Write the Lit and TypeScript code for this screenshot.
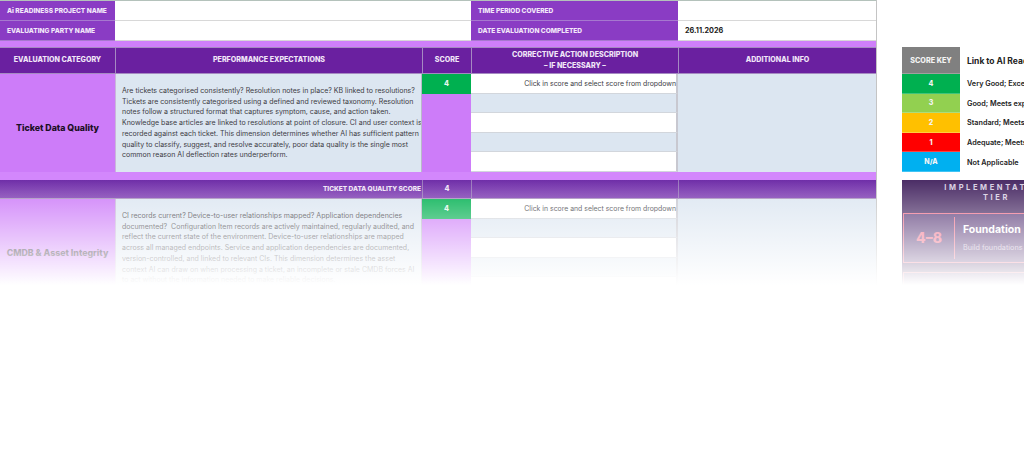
import { LitElement, html, css } from 'lit';
import { customElement } from 'lit/decorators.js';

const FIRST_TEXT = `Are tickets categorised consistently? Resolution notes in place? KB linked to resolutions?
Tickets are consistently categorised using a defined and reviewed taxonomy. Resolution
notes follow a structured format that captures symptom, cause, and action taken.
Knowledge base articles are linked to resolutions at point of closure. CI and user context is
recorded against each ticket. This dimension determines whether AI has sufficient pattern
quality to classify, suggest, and resolve accurately, poor data quality is the single most
common reason AI deflection rates underperform.`;

const SECOND_TEXT = `CI records current? Device-to-user relationships mapped? Application dependencies
documented?  Configuration Item records are actively maintained, regularly audited, and
reflect the current state of the environment. Device-to-user relationships are mapped
across all managed endpoints. Service and application dependencies are documented,
version-controlled, and linked to relevant CIs. This dimension determines the asset
context AI can draw on when processing a ticket, an incomplete or stale CMDB forces AI
to act without the information needed to make reliable decisions.`;

const KEY = [
  { score: '4', label: 'Very Good; Exceeds expectations', color: 'k4' },
  { score: '3', label: 'Good; Meets expectations', color: 'k3' },
  { score: '2', label: 'Standard; Meets requirements', color: 'k2' },
  { score: '1', label: 'Adequate; Meets minimum', color: 'k1' },
  { score: 'N/A', label: 'Not Applicable', color: 'kna' },
];

@customElement('app-root')
export class AppRoot extends LitElement {
  static styles = css`
    :host {
      display: block;
      position: relative;
      width: 1024px;
      height: 457px;
      overflow: hidden;
      background: #fff;
      font-family: 'Inter', 'Liberation Sans', sans-serif;
      color: #222;
    }
    .page {
      display: flex;
      align-items: flex-start;
      width: 1300px;
    }

    /* sheet */
    .sheet {
      width: 877px;
      flex: none;
      border-right: 1px solid #c4c4c4;
      box-sizing: border-box;
      height: 300px;
      overflow: hidden;
    }
    .grid {
      display: grid;
      grid-template-columns: 115px 307px 49px 207px 198px;
    }
    .meta {
      grid-template-rows: 20px 20px;
      border-top: 1px solid #b4c2bb;
      height: 40px;
      box-sizing: border-box;
    }
    .meta-label {
      background: #8a3cc4;
      color: #f3e8fa;
      font-size: 6.55px;
      font-weight: 800;
      display: flex;
      align-items: center;
      padding-left: 7px;
      border-bottom: 1px solid #a678cf;
      white-space: nowrap;
    }
    .meta-value {
      background: #fff;
      font-size: 7.25px;
      font-weight: 700;
      display: flex;
      align-items: center;
      padding-left: 7px;
      border-bottom: 1px solid #d8d8d8;
    }
    .wide {
      grid-column: span 2;
    }
    .strip {
      height: 7px;
      background: #cf7ffa;
    }
    .strip.low {
      height: 8px;
      background: #d387fc;
    }
    .head {
      grid-template-rows: 27px;
    }
    .head div {
      background: #6a20a0;
      color: #f1e6f8;
      font-size: 7.1px;
      font-weight: 800;
      line-height: 10.7px;
      text-align: center;
      display: flex;
      align-items: center;
      justify-content: center;
      border-left: 1px solid #a58ac2;
      border-top: 1px solid #a58ac2;
      border-bottom: 1px solid #a58ac2;
      box-sizing: border-box;
    }
    .head div:first-child {
      border-left: none;
    }

    /* category block */
    .block {
      grid-template-rows: repeat(5, 19.6px);
    }
    .category {
      grid-row: span 5;
      background: #cd7cf9;
      display: flex;
      align-items: center;
      justify-content: center;
      padding-top: 9px;
      font-size: 8.8px;
      font-weight: 800;
      color: #1c0f26;
    }
    .expect {
      grid-row: span 5;
      background: #dce6f1;
      border-left: 1px solid #c9b6da;
      border-right: 1px solid #b9b9c9;
      font-size: 7px;
      line-height: 10.7px;
      color: #3c3c44;
      white-space: pre;
      display: flex;
      align-items: center;
      padding: 1px 0 0 6px;
      overflow: hidden;
    }
    .score {
      background: #00b050;
      color: #e8f8ee;
      font-size: 7.25px;
      font-weight: 800;
      display: flex;
      align-items: center;
      justify-content: center;
    }
    .score-rest {
      grid-row: span 4;
      grid-column: 3;
      background: #cd7cf9;
    }
    .action {
      grid-column: 4;
      border-right: 2px solid #c8c8d0;
      border-bottom: 1px solid #d2d6dc;
      font-size: 6.9px;
      color: #3c3c44;
      display: flex;
      align-items: center;
      justify-content: flex-end;
      background: #fff;
      white-space: nowrap;
    }
    .action.alt {
      background: #dce6f1;
    }
    .info {
      grid-column: 5;
      grid-row: 1 / span 5;
      background: #dce6f1;
    }
    .total {
      grid-template-rows: 19px;
    }
    .total div {
      background: linear-gradient(#6f2ea8, #8040b4);
      color: #f1e6f8;
      font-size: 6.5px;
      font-weight: 800;
      display: flex;
      align-items: center;
      border-bottom: 1px solid #a890bd;
      border-left: 1px solid #9a78bc;
    }
    .total .name {
      grid-column: span 2;
      justify-content: flex-end;
      padding-right: 1px;
      border-left: none;
    }
    .total .num {
      justify-content: center;
      font-size: 7.25px;
    }

    /* score key */
    .side {
      flex: none;
      margin: 47px 0 0 25px;
      width: 400px;
    }
    .key {
      display: grid;
      grid-template-columns: 58px 1fr;
      grid-template-rows: 27px repeat(5, 19.6px);
      align-items: center;
    }
    .swatch {
      align-self: stretch;
      display: flex;
      align-items: center;
      justify-content: center;
      color: #f4f4f4;
      font-size: 7px;
      font-weight: 800;
      border-bottom: 1px solid rgba(255, 255, 255, 0.25);
    }
    .swatch.title {
      background: #808080;
      font-size: 7.2px;
    }
    .k4 { background: #00b050; }
    .k3 { background: #92d050; }
    .k2 { background: #ffc000; }
    .k1 { background: #ff0000; }
    .kna { background: #00b0f0; }
    .key-text {
      padding-left: 7px;
      font-size: 7.25px;
      font-weight: 600;
      color: #222;
      white-space: nowrap;
    }
    .key-text.title {
      font-size: 8.5px;
      font-weight: 700;
    }

    /* tier panel */
    .tier {
      margin-top: 8px;
      width: 188px;
      height: 112px;
      background: #4b2d66;
      box-sizing: border-box;
      padding: 3px 0 0 1px;
    }
    .tier-title {
      text-align: center;
      color: #d8cfe2;
      font-size: 7.5px;
      font-weight: 700;
      letter-spacing: 2.6px;
      line-height: 10px;
    }
    .tier-card {
      display: flex;
      align-items: center;
      margin-top: 10px;
      height: 50px;
      border: 1px solid #f0708c;
      box-sizing: border-box;
      background: #5e3f7c;
    }
    .tier-card + .tier-card {
      margin-top: 9px;
    }
    .range {
      width: 50px;
      flex: none;
      text-align: center;
      font-size: 14px;
      font-weight: 800;
      color: #f0708c;
    }
    .tier-body {
      border-left: 1px solid #f0708c;
      padding-left: 8px;
      height: 42px;
      display: flex;
      flex-direction: column;
      justify-content: center;
      gap: 7px;
    }
    .tier-name {
      color: #fff;
      font-size: 10.5px;
      font-weight: 700;
    }
    .tier-note {
      color: #c9bdd4;
      font-size: 7.25px;
      white-space: nowrap;
    }

    /* the capture fades out to white over the lower rows */
    .fade {
      position: absolute;
      inset: 180px 0 0 0;
      background: linear-gradient(rgba(255, 255, 255, 0), #fff 105px);
      pointer-events: none;
    }
  `;

  renderBlock(name: string, text: string) {
    return html`
      <div class="grid block">
        <div class="category">${name}</div>
        <div class="expect">${text}</div>
        <div class="score">4</div>
        <div class="score-rest"></div>
        <div class="action" style="grid-row:1">Click in score and select score from dropdown</div>
        <div class="action alt" style="grid-row:2"></div>
        <div class="action" style="grid-row:3"></div>
        <div class="action alt" style="grid-row:4"></div>
        <div class="action" style="grid-row:5"></div>
        <div class="info"></div>
      </div>
    `;
  }

  render() {
    return html`
      <div class="page">
        <div class="sheet">
          <div class="grid meta">
            <div class="meta-label">Ai READINESS PROJECT NAME</div>
            <div class="meta-value wide"></div>
            <div class="meta-label">TIME PERIOD COVERED</div>
            <div class="meta-value"></div>
            <div class="meta-label">EVALUATING PARTY NAME</div>
            <div class="meta-value wide"></div>
            <div class="meta-label">DATE EVALUATION COMPLETED</div>
            <div class="meta-value">26.11.2026</div>
          </div>
          <div class="strip"></div>
          <div class="grid head">
            <div>EVALUATION CATEGORY</div>
            <div>PERFORMANCE EXPECTATIONS</div>
            <div>SCORE</div>
            <div>CORRECTIVE ACTION DESCRIPTION<br />– IF NECESSARY –</div>
            <div>ADDITIONAL INFO</div>
          </div>
          ${this.renderBlock('Ticket Data Quality', FIRST_TEXT)}
          <div class="strip low"></div>
          <div class="grid total">
            <div class="name">TICKET DATA QUALITY SCORE</div>
            <div class="num">4</div>
            <div></div>
            <div></div>
          </div>
          ${this.renderBlock('CMDB & Asset Integrity', SECOND_TEXT)}
        </div>
        <div class="side">
          <div class="key">
            <div class="swatch title">SCORE KEY</div>
            <div class="key-text title">Link to AI Readiness Tier</div>
            ${KEY.map(
              (k) => html`
                <div class="swatch ${k.color}">${k.score}</div>
                <div class="key-text">${k.label}</div>
              `,
            )}
          </div>
          <div class="tier">
            <div class="tier-title">IMPLEMENTATION<br />TIER</div>
            <div class="tier-card">
              <div class="range">4–8</div>
              <div class="tier-body">
                <div class="tier-name">Foundation</div>
                <div class="tier-note">Build foundations first</div>
              </div>
            </div>
            <div class="tier-card"></div>
          </div>
        </div>
      </div>
      <div class="fade"></div>
    `;
  }
}
